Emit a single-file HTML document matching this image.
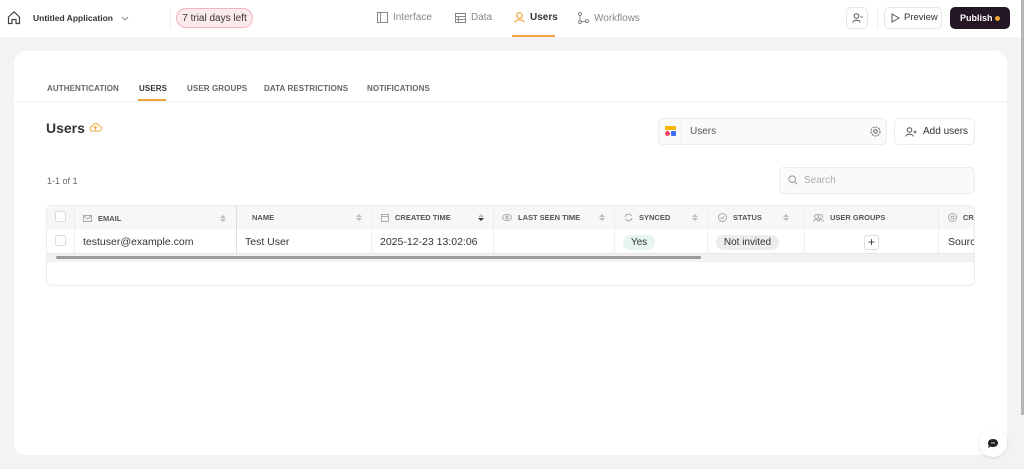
<!DOCTYPE html>
<html><head><meta charset="utf-8"><style>
*{box-sizing:border-box;margin:0;padding:0}
body{width:1024px;height:469px;overflow:hidden;background:#f3f3f5;font-family:"Liberation Sans",sans-serif;color:#222;position:relative}
.top{position:absolute;left:0;top:0;width:1021px;height:37px;background:#fff}
.abs{position:absolute}
svg{display:block}
.tab{position:absolute;top:12px;font-size:10px;color:#888;display:flex;align-items:center;gap:5px}
.card{position:absolute;left:14px;top:51px;width:993px;height:404px;background:#fff;border-radius:12px}
.st{position:absolute;top:84px;font-size:8px;font-weight:bold;letter-spacing:.1px;color:#666}
.th{position:absolute;top:213px;font-size:7.5px;font-weight:bold;color:#555;display:flex;align-items:center;gap:6px}
.td{position:absolute;top:236px;font-size:10.5px;color:#333}
.sort{position:absolute;top:213px;width:6px;height:9px}
.vl{position:absolute;top:206px;width:1px;height:48px;background:#eee}
</style></head><body>
<div class="top"></div>
<svg class="abs" style="left:7px;top:10px" width="14" height="15" viewBox="0 0 14 15"><path d="M1.5 7 L7 1.8 L12.5 7 V13.5 H9 V9.5 H5 V13.5 H1.5 Z" fill="none" stroke="#444" stroke-width="1.2" stroke-linejoin="round"/></svg>
<div class="abs" style="left:33px;top:13px;font-size:8.5px;font-weight:bold;color:#333">Untitled Application</div>
<svg class="abs" style="left:121px;top:16px" width="8" height="5"><path d="M1 1 L4 4 L7 1" fill="none" stroke="#888" stroke-width="1"/></svg>
<div class="abs" style="left:170px;top:8px;width:1px;height:21px;background:#eee"></div>
<div class="abs" style="left:176px;top:8px;width:77px;height:20px;border:1px solid #f1b7bd;background:#fcebed;border-radius:10px;font-size:10px;color:#333;text-align:center;line-height:19px">7 trial days left</div>
<div class="tab" style="left:377px"><svg width="11" height="11"><rect x=".5" y=".5" width="10" height="10" fill="none" stroke="#888"/><path d="M3.5 .5 V10.5" stroke="#888"/></svg>Interface</div>
<div class="tab" style="left:455px"><svg width="11" height="10"><rect x=".5" y=".5" width="10" height="9" fill="none" stroke="#888"/><path d="M.5 3.5 H10.5 M.5 6.5 H10.5 M3.5 3.5 V9.5" stroke="#888"/></svg>Data</div>
<div class="tab" style="left:514px;color:#333;font-weight:bold"><svg width="11" height="11"><circle cx="5.5" cy="3.5" r="2.8" fill="none" stroke="#f0a53a" stroke-width="1.2"/><path d="M.8 10.5 C1.5 7 9.5 7 10.2 10.5" fill="none" stroke="#f0a53a" stroke-width="1.2"/></svg>Users</div>
<div class="abs" style="left:512px;top:35px;width:43px;height:2px;background:#f0a53a"></div>
<div class="tab" style="left:578px"><svg width="11" height="12"><circle cx="2" cy="2" r="1.5" fill="none" stroke="#888"/><circle cx="2" cy="10" r="1.5" fill="none" stroke="#888"/><circle cx="9" cy="9" r="1.5" fill="none" stroke="#888"/><path d="M2 3.5 V8.5 M3.5 9.5 H7.5" stroke="#888" fill="none"/></svg>Workflows</div>
<div class="abs" style="left:846px;top:7px;width:22px;height:22px;border:1px solid #e6e6e6;border-radius:5px"></div>
<svg class="abs" style="left:852px;top:13px" width="11" height="10"><circle cx="4.5" cy="3" r="2.3" fill="none" stroke="#555"/><path d="M.7 9.5 C1 6.5 8 6.5 8.3 9.5 M8.5 4 H10.8" fill="none" stroke="#555"/></svg>
<div class="abs" style="left:877px;top:8px;width:1px;height:21px;background:#eee"></div>
<div class="abs" style="left:884px;top:7px;width:58px;height:22px;border:1px solid #e6e6e6;border-radius:5px;font-size:9.5px;color:#333;line-height:20px;padding-left:19px">Preview</div>
<svg class="abs" style="left:891px;top:13px" width="9" height="10"><path d="M1 1 L8 5 L1 9 Z" fill="none" stroke="#555"/></svg>
<div class="abs" style="left:950px;top:7px;width:60px;height:22px;background:#241625;border-radius:5px;font-size:9px;font-weight:bold;color:#fff;line-height:22px;padding-left:10px">Publish</div>
<div class="abs" style="left:995px;top:16px;width:5px;height:5px;border-radius:50%;background:#f0a53a"></div>
<div class="abs" style="left:1021px;top:0;width:3px;height:415px;background:#b5b5b5"></div>

<div class="card"></div>
<div class="abs" style="left:14px;top:101px;width:993px;height:1px;background:#f0f0f0"></div>
<div class="st" style="left:47px">AUTHENTICATION</div>
<div class="st" style="left:139px;color:#333">USERS</div>
<div class="abs" style="left:138px;top:99px;width:28px;height:2px;background:#f0a53a"></div>
<div class="st" style="left:187px">USER GROUPS</div>
<div class="st" style="left:264px">DATA RESTRICTIONS</div>
<div class="st" style="left:367px">NOTIFICATIONS</div>
<div class="abs" style="left:46px;top:120px;font-size:14px;font-weight:bold;color:#333">Users</div>
<svg class="abs" style="left:89px;top:122px" width="13" height="10"><path d="M3 9 H10 A2.5 2.5 0 0 0 10 4 A3.5 3.5 0 0 0 3.3 4.3 A2.4 2.4 0 0 0 3 9 Z M6.5 8 V4.5 M5 6 L6.5 4.5 L8 6" fill="none" stroke="#f0a53a" stroke-width="1"/></svg>

<div class="abs" style="left:658px;top:118px;width:229px;height:27px;border:1px solid #ececec;border-radius:5px;background:#fafafa"></div>
<div class="abs" style="left:681px;top:119px;width:1px;height:25px;background:#ececec"></div>
<div class="abs" style="left:665px;top:126px;width:11px;height:4px;background:#fbb400;border-radius:1px"></div>
<div class="abs" style="left:665px;top:131px;width:5px;height:5px;background:#f43f6b;border-radius:50%"></div>
<div class="abs" style="left:671px;top:131px;width:5px;height:5px;background:#3a6cf4;border-radius:1px"></div>
<div class="abs" style="left:690px;top:126px;font-size:10px;color:#555">Users</div>
<svg class="abs" style="left:870px;top:126px" width="11" height="11"><circle cx="5.5" cy="5.5" r="4.5" fill="none" stroke="#666" stroke-dasharray="2 1"/><circle cx="5.5" cy="5.5" r="1.8" fill="none" stroke="#666"/></svg>
<div class="abs" style="left:894px;top:118px;width:81px;height:27px;border:1px solid #ececec;border-radius:5px;font-size:10px;color:#333;line-height:25px;padding-left:28px">Add users</div>
<svg class="abs" style="left:905px;top:127px" width="12" height="10"><circle cx="4.5" cy="3" r="2.3" fill="none" stroke="#555"/><path d="M.7 9.5 C1 6.5 8 6.5 8.3 9.5 M8.5 5 H11.5 M10 3.5 V6.5" fill="none" stroke="#555"/></svg>
<div class="abs" style="left:47px;top:176px;font-size:9px;color:#666">1-1 of 1</div>
<div class="abs" style="left:779px;top:167px;width:196px;height:27px;border:1px solid #ececec;border-radius:5px;background:#fafafa;font-size:10px;color:#aaa;line-height:25px;padding-left:24px">Search</div>
<svg class="abs" style="left:788px;top:175px" width="10" height="10"><circle cx="4.2" cy="4.2" r="3.3" fill="none" stroke="#999"/><path d="M6.7 6.7 L9.3 9.3" stroke="#999"/></svg>

<div class="abs" style="left:46px;top:205px;width:929px;height:81px;border:1px solid #ececec;border-radius:6px"></div>
<div class="abs" style="left:47px;top:206px;width:927px;height:23px;background:#f7f7f8;border-radius:6px 6px 0 0"></div>
<div class="abs" style="left:47px;top:253px;width:927px;height:9px;background:#f2f2f3"></div>
<div class="abs" style="left:56px;top:256px;width:645px;height:3px;background:#9a9a9a;border-radius:2px"></div>
<div class="abs" style="left:47px;top:253px;width:927px;height:1px;background:#e6e6e6"></div>
<div class="abs" style="left:55px;top:211px;width:11px;height:11px;border:1px solid #ddd;border-radius:2px;background:#fff"></div>
<div class="abs" style="left:55px;top:235px;width:11px;height:11px;border:1px solid #ddd;border-radius:2px;background:#fff"></div>
<div class="vl" style="left:74px"></div><div class="vl" style="left:236px;background:#ddd"></div><div class="vl" style="left:371px"></div><div class="vl" style="left:493px"></div><div class="vl" style="left:614px"></div><div class="vl" style="left:707px"></div><div class="vl" style="left:804px"></div><div class="vl" style="left:938px"></div>
<div class="th" style="left:83px;top:214px"><svg width="9" height="7"><rect x=".5" y=".5" width="8" height="6" fill="none" stroke="#aaa"/><path d="M.5 .5 L4.5 4 L8.5 .5" fill="none" stroke="#aaa"/></svg>EMAIL</div>
<div class="th" style="left:252px">NAME</div>
<div class="th" style="left:381px"><svg width="8" height="9"><rect x=".5" y="1.5" width="7" height="7" fill="none" stroke="#aaa"/><path d="M.5 3.5 H7.5" stroke="#aaa"/></svg>CREATED TIME</div>
<div class="th" style="left:502px"><svg width="10" height="7"><ellipse cx="5" cy="3.5" rx="4.5" ry="3" fill="none" stroke="#aaa"/><circle cx="5" cy="3.5" r="1.2" fill="none" stroke="#aaa"/></svg>LAST SEEN TIME</div>
<div class="th" style="left:624px"><svg width="9" height="9"><path d="M1 4 A3.5 3.5 0 0 1 7.5 3 M8 5 A3.5 3.5 0 0 1 1.5 6" fill="none" stroke="#aaa"/></svg>SYNCED</div>
<div class="th" style="left:718px"><svg width="9" height="9"><circle cx="4.5" cy="4.5" r="4" fill="none" stroke="#aaa"/><path d="M2.7 4.6 L4 5.9 L6.4 3.3" fill="none" stroke="#aaa"/></svg>STATUS</div>
<div class="th" style="left:813px"><svg width="11" height="8"><circle cx="3.5" cy="2.5" r="2" fill="none" stroke="#aaa"/><circle cx="7.5" cy="2.5" r="2" fill="none" stroke="#aaa"/><path d="M.5 7.5 C1 5 6 5 6.5 7.5 M4.5 7.5 C5 5 10 5 10.5 7.5" fill="none" stroke="#aaa"/></svg>USER GROUPS</div>
<div class="th" style="left:948px"><svg width="9" height="9"><circle cx="4.5" cy="4.5" r="4" fill="none" stroke="#aaa"/><circle cx="4.5" cy="4.5" r="1.5" fill="none" stroke="#aaa"/></svg>CR</div>
<svg class="sort" style="left:220px;top:214px" width="6" height="9"><path d="M0 4 L3 1 L6 4 Z M0 5 L3 8 L6 5 Z" fill="#bbb"/></svg>
<svg class="sort" style="left:356px" width="6" height="9"><path d="M0 4 L3 1 L6 4 Z M0 5 L3 8 L6 5 Z" fill="#bbb"/></svg>
<svg class="sort" style="left:478px" width="6" height="9"><path d="M0 4 L3 1 L6 4 Z" fill="#bbb"/><path d="M0 5 L3 8 L6 5 Z" fill="#333"/></svg>
<svg class="sort" style="left:599px" width="6" height="9"><path d="M0 4 L3 1 L6 4 Z M0 5 L3 8 L6 5 Z" fill="#bbb"/></svg>
<svg class="sort" style="left:692px" width="6" height="9"><path d="M0 4 L3 1 L6 4 Z M0 5 L3 8 L6 5 Z" fill="#bbb"/></svg>
<svg class="sort" style="left:783px" width="6" height="9"><path d="M0 4 L3 1 L6 4 Z M0 5 L3 8 L6 5 Z" fill="#bbb"/></svg>
<div class="abs" style="left:938px;top:206px;width:36px;height:47px;overflow:hidden"><div style="position:absolute;left:10px;top:30px;font-size:10.5px;color:#333">Source</div></div>
<div class="td" style="left:83px">testuser@example.com</div>
<div class="td" style="left:245px">Test User</div>
<div class="td" style="left:380px">2025-12-23 13:02:06</div>
<div class="abs" style="left:623px;top:235px;width:32px;height:15px;border-radius:8px;background:#e6f6ee;font-size:10px;color:#333;text-align:center;line-height:15px">Yes</div>
<div class="abs" style="left:716px;top:235px;width:63px;height:15px;border-radius:8px;background:#ededf0;font-size:10px;color:#333;text-align:center;line-height:15px">Not invited</div>
<div class="abs" style="left:864px;top:235px;width:15px;height:15px;border:1px solid #ddd;border-radius:3px;font-size:12px;text-align:center;line-height:13px;color:#333">+</div>

<div class="abs" style="left:979px;top:429px;width:28px;height:28px;border-radius:50%;background:#fff;box-shadow:0 1px 3px rgba(0,0,0,.12)"></div>
<svg class="abs" style="left:987px;top:438px" width="12" height="11"><path d="M6 1 C9 1 11 2.8 11 5 C11 7.2 9 9 6 9 C5 9 4.2 8.8 3.5 8.5 L1 10 L1.8 7.5 C1.3 6.8 1 6 1 5 C1 2.8 3 1 6 1 Z" fill="#222"/><path d="M4 5 H8" stroke="#fff" stroke-width=".8"/></svg>
</body></html>
